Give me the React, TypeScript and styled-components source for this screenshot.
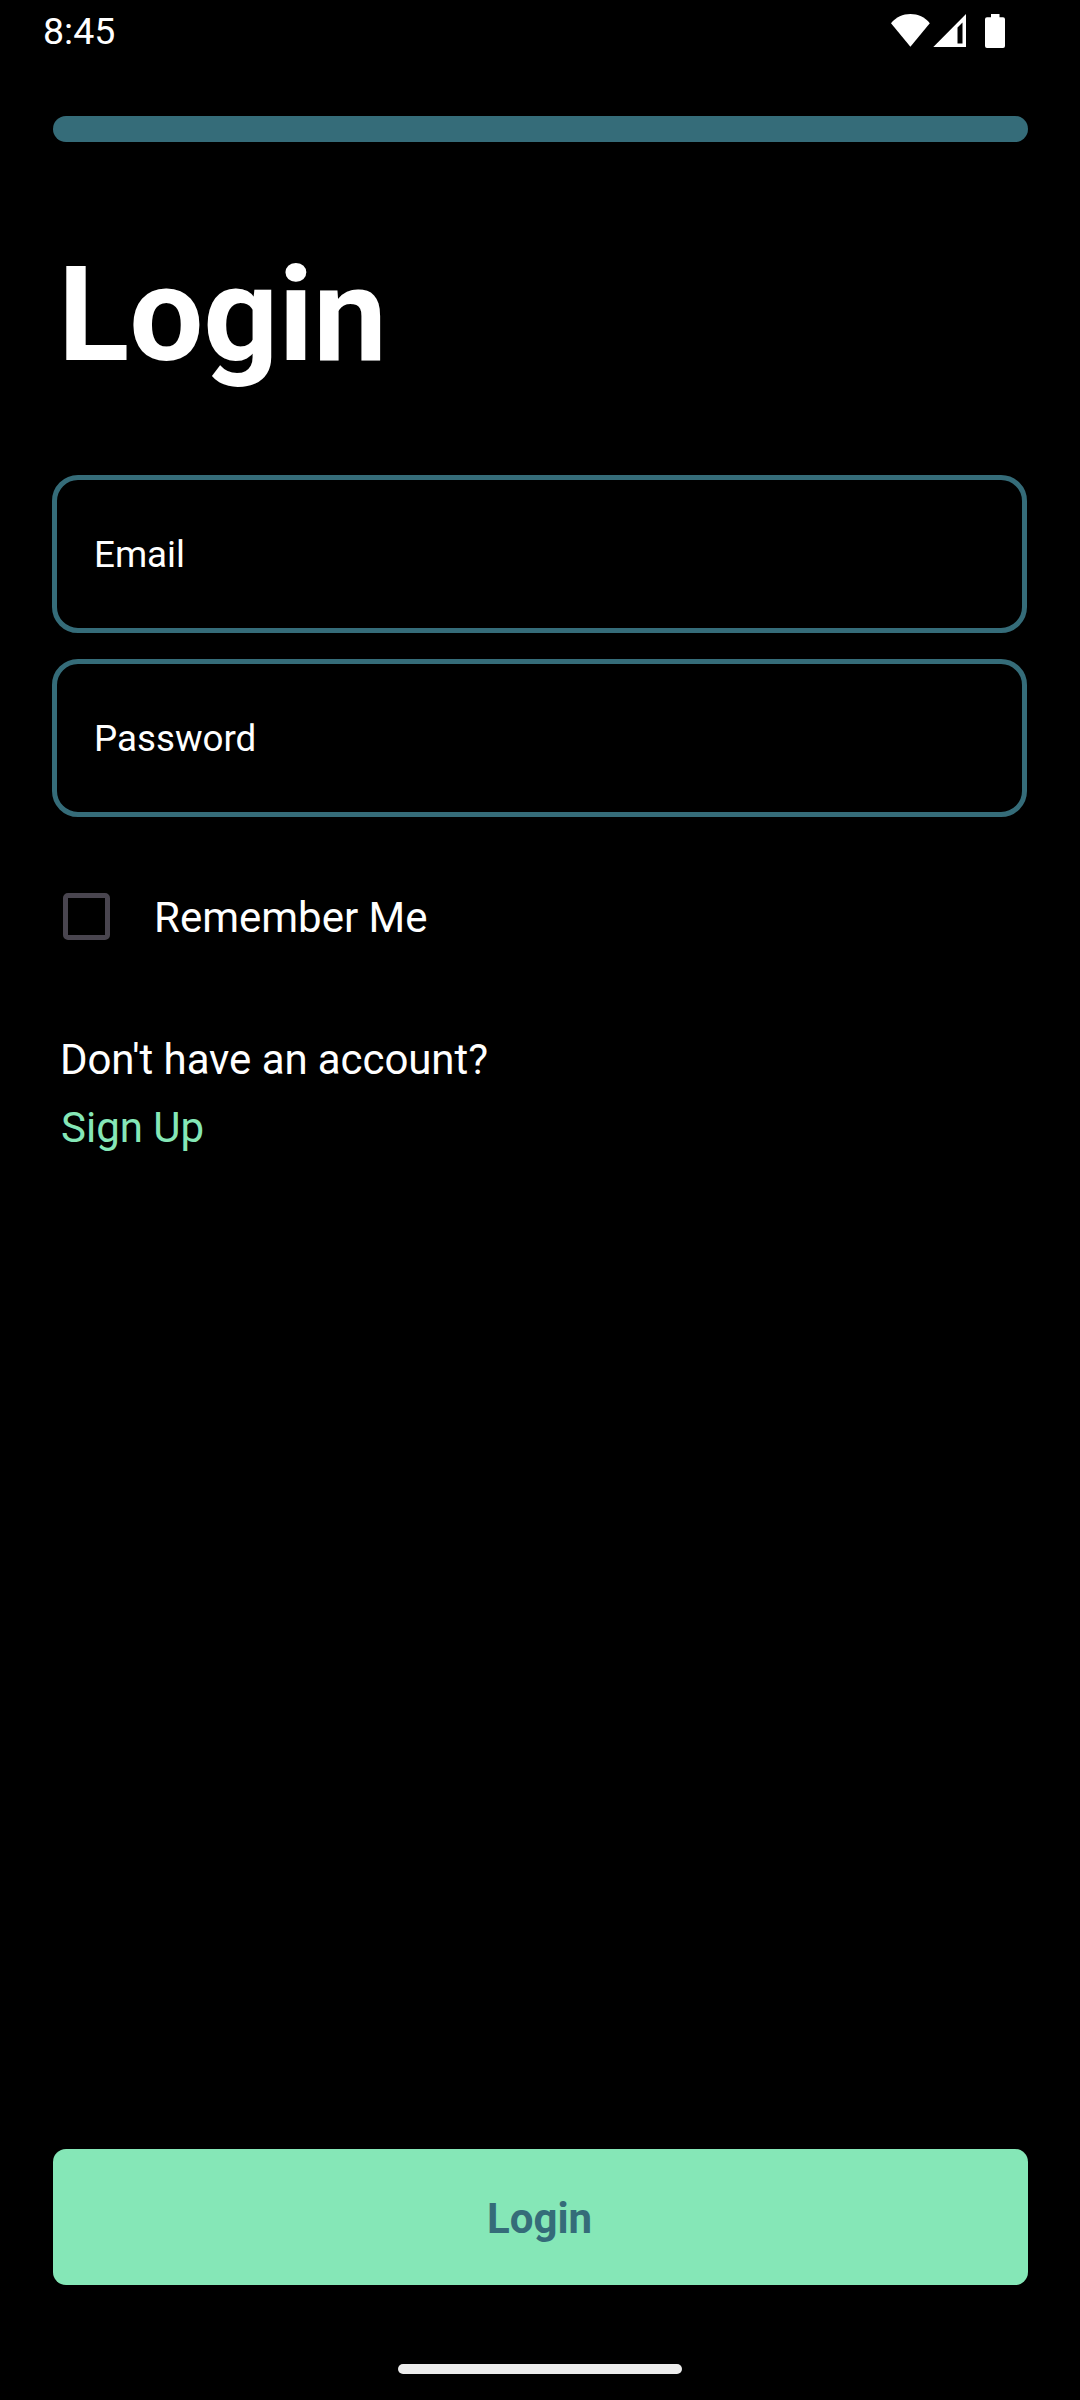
import React, { useState } from "react";
import styled, { createGlobalStyle } from "styled-components";

const teal = "#356c79";
const mint = "#85e7b7";

const GlobalStyle = createGlobalStyle`
  * { box-sizing: border-box; }
  body {
    margin: 0;
    background: #000;
    color: #fff;
    font-family: Roboto, sans-serif;
  }
`;

const Screen = styled.div`
  width: 1080px;
  height: 2400px;
  display: flex;
  flex-direction: column;
  background: #000;
  overflow: hidden;
`;

const StatusBar = styled.header`
  height: 62px;
  padding: 0 75px 0 43px;
  display: flex;
  align-items: center;
  justify-content: space-between;
`;

const Clock = styled.span`
  font-size: 37.5px;
  line-height: 44px;
`;

const StatusIcons = styled.svg`
  display: block;
  fill: #fff;
`;

const Content = styled.main`
  flex: 1;
  display: flex;
  flex-direction: column;
  align-items: flex-start;
  padding: 54px 52px 0 53px;
`;

const Progress = styled.div`
  width: 975px;
  height: 26px;
  border-radius: 13px;
  background: ${teal};
`;

const Title = styled.h1`
  margin: 95px 0 0 5px;
  font-size: 131.5px;
  line-height: 156px;
  font-weight: 700;
`;

const Fields = styled.div`
  margin: 82px 0 0 -1px;
  display: flex;
  flex-direction: column;
  gap: 26px;
`;

const Field = styled.input`
  width: 975px;
  height: 158px;
  padding: 0 37px;
  border: 5px solid ${teal};
  border-radius: 26px;
  outline: none;
  background: transparent;
  color: #fff;
  font-family: inherit;
  font-size: 36.75px;
  &::placeholder { color: #fff; opacity: 1; }
`;

const Remember = styled.label`
  margin: 76px 0 0 10px;
  display: flex;
  align-items: flex-start;
  gap: 44px;
  height: 48px;
`;

const Checkbox = styled.input`
  appearance: none;
  width: 47px;
  height: 47px;
  margin: 0;
  border: 5px solid #49454f;
  border-radius: 5px;
  &:checked { background: #49454f; }
`;

const BodyText = styled.span`
  font-size: 42px;
  line-height: 48px;
  white-space: nowrap;
`;

const RememberText = styled(BodyText)`
  padding-top: 1px;
`;

const Question = styled(BodyText)`
  letter-spacing: -0.08px;
`;

const SignUpLink = styled(BodyText)`
  padding-left: 1px;
  color: ${mint};
`;

const SignUp = styled.div`
  margin: 95px 0 0 7px;
  display: flex;
  flex-direction: column;
  gap: 20px;
`;

const LoginButton = styled.button`
  width: 975px;
  height: 136px;
  margin: auto 0 79px;
  padding: 3px 2px 0 0;
  border: 0;
  border-radius: 13px;
  background: ${mint};
  color: ${teal};
  font-family: inherit;
  font-size: 42px;
  font-weight: 700;
`;

const NavBar = styled.footer`
  height: 36px;
  display: flex;
  justify-content: center;
`;

const NavHandle = styled.div`
  width: 284px;
  height: 10px;
  border-radius: 5px;
  background: #ececec;
`;

export default function App() {
  const [remember, setRemember] = useState(false);
  return (
    <Screen>
      <GlobalStyle />
      <StatusBar>
        <Clock>8:45</Clock>
        <StatusIcons width="114" height="34" viewBox="0 0 114 34">
          <path d="M0 9.2C5 3 12 0 19.4 0S34 3 38.8 9.2L19.4 32.8Z" />
          <path fillRule="evenodd" d="M42.3 33L75 0V33ZM66.5 13.5V29.5H71.5V8.5Z" />
          <path d="M100 0h8.5v3.3H112q2 0 2 2V32q0 2-2 2H96q-2 0-2-2V5.3q0-2 2-2h4Z" />
        </StatusIcons>
      </StatusBar>
      <Content>
        <Progress />
        <Title>Login</Title>
        <Fields>
          <Field type="text" placeholder="Email" />
          <Field type="password" placeholder="Password" />
        </Fields>
        <Remember>
          <Checkbox type="checkbox" checked={remember} onChange={() => setRemember(!remember)} />
          <RememberText>Remember Me</RememberText>
        </Remember>
        <SignUp>
          <Question>Don't have an account?</Question>
          <SignUpLink>Sign Up</SignUpLink>
        </SignUp>
        <LoginButton>Login</LoginButton>
      </Content>
      <NavBar>
        <NavHandle />
      </NavBar>
    </Screen>
  );
}
